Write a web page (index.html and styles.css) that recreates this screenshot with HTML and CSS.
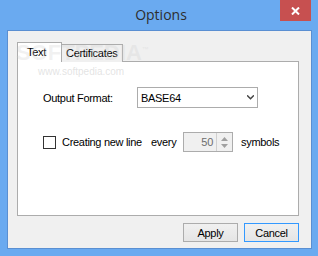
FILE: index.html
```html
<!DOCTYPE html>
<html>
<head>
<meta charset="utf-8">
<link rel="stylesheet" href="styles.css">
</head>
<body>
<div class="window">
  <div class="titlebar">
    <span></span>
    <span class="title">Options</span>
    <div class="close">
      <svg width="9" height="8" viewBox="0 0 9 8"><path d="M1 0.5 L8 7.5 M8 0.5 L1 7.5" stroke="#fff" stroke-width="2"/></svg>
    </div>
  </div>
  <div class="client">
    <div class="tabs">
      <div class="tab active">Text</div>
      <div class="tab cert">Certificates</div>
    </div>
    <div class="panel">
      <div class="row format">
        <span class="label">Output Format:</span>
        <div class="select">
          <span>BASE64</span>
          <svg width="7" height="5" viewBox="0 0 7 5"><path d="M0.5 0.8 L3.5 3.8 L6.5 0.8" stroke="#444" stroke-width="1.5" fill="none" stroke-linecap="round"/></svg>
        </div>
      </div>
      <div class="row newline">
        <span class="checkbox"></span>
        <span class="cblabel">Creating new line</span>
        <span class="every">every</span>
        <div class="spin">
          <span class="value">50</span>
          <div class="arrows">
            <svg width="7" height="4" viewBox="0 0 7 4"><path d="M0 4 L3.5 0 L7 4 Z" fill="#a0a0a0"/></svg>
            <svg width="7" height="4" viewBox="0 0 7 4"><path d="M0 0 L3.5 4 L7 0 Z" fill="#a0a0a0"/></svg>
          </div>
        </div>
        <span class="symbols">symbols</span>
      </div>
    </div>
    <div class="buttons">
      <button class="btn">Apply</button>
      <button class="btn default">Cancel</button>
    </div>
  </div>
  <div class="watermark">
    <span class="wm-big">SOFTPEDIA<sup>™</sup></span>
    <span class="wm-small">www.softpedia.com</span>
  </div>
</div>
</body>
</html>
```

FILE: styles.css
```css
* { box-sizing: border-box; }
html, body { margin: 0; padding: 0; }
body { width: 318px; height: 256px; overflow: hidden; font-family: "Liberation Sans", Arial, sans-serif; font-size: 11px; letter-spacing: -0.3px; color: #000; }

.window {
  position: relative;
  width: 318px; height: 256px;
  background: #6aaaf0;
  padding: 0 6px 7px 7px;
  display: flex; flex-direction: column;
}
.titlebar {
  height: 30px;
  display: grid;
  grid-template-columns: 1fr auto 1fr;
  align-items: start;
}
.title {
  font-family: "Open Sans", "Noto Sans", sans-serif;
  font-size: 14px;
  letter-spacing: 0;
  color: #2e2e2e;
  line-height: 30px;
  padding-left: 3px;
}
.close {
  justify-self: end;
  margin-right: 1px;
  width: 31px; height: 21px;
  background: #c75050;
  display: flex; align-items: center; justify-content: center;
}
.client {
  flex: 1;
  background: #f0f0f0;
  border: 1px solid #5a8fd2;
  padding: 11px 12px 5px 9px;
  display: flex; flex-direction: column;
}
.tabs { display: flex; align-items: flex-end; height: 20px; position: relative; z-index: 1; }
.tab {
  height: 18px;
  border: 1px solid #acacac;
  border-bottom: none;
  background: #f0f0f0;
  line-height: 17px;
}
.tab.active {
  height: 20px;
  width: 45px;
  background: #fff;
  padding-left: 9px;
  line-height: 18px;
}
.tab.cert { width: 61px; padding-left: 4px; border-left: none; }
.panel {
  height: 155px;
  margin-top: -1px;
  background: #fff;
  border: 1px solid #acacac;
  padding: 25px 0 0 25px;
}
.row { display: flex; align-items: center; }
.format .label { width: 94px; }
.select {
  width: 121px; height: 21px;
  border: 1px solid #acacac;
  display: flex; align-items: center; justify-content: space-between;
  padding: 0 3px 0 3px;
}
.newline { margin-top: 24px; }
.checkbox {
  width: 13px; height: 13px;
  border: 1px solid #333;
  background: #fff;
  margin-right: 6px;
}
.cblabel { width: 89px; }
.every { width: 32px; }
.spin {
  width: 50px; height: 20px;
  border: 1px solid #acacac;
  background: #f0f0f0;
  display: flex; align-items: center; justify-content: flex-end;
}
.spin .value { color: #6d6d6d; margin-right: 3px; }
.arrows {
  width: 16px; height: 18px;
  border-left: 1px solid #d0d0d0;
  display: flex; flex-direction: column; align-items: center; justify-content: space-around;
  padding: 2px 0;
}
.symbols { margin-left: 8px; }
.buttons {
  display: flex; justify-content: flex-end; gap: 6px;
  margin-top: 7px;
}
.btn {
  width: 55px; height: 19px;
  font-family: "Liberation Sans", Arial, sans-serif;
  font-size: 11px;
  letter-spacing: -0.3px;
  color: #000;
  border: 1px solid #acacac;
  background: linear-gradient(#f0f0f0, #e5e5e5);
  padding: 0;
}
.btn.default { border-color: #3399ff; }

.watermark {
  position: absolute; left: 16px; top: 40px;
  pointer-events: none;
  display: flex; flex-direction: column;
  z-index: 2;
  letter-spacing: 0;
}
.wm-big {
  font-family: "Liberation Sans", Arial, sans-serif;
  font-size: 22px; font-weight: bold; letter-spacing: 0;
  color: rgba(200,200,200,0.25);
}
.wm-big sup { font-size: 7px; }
.wm-small {
  margin-left: 22px;
  font-size: 10px;
  color: rgba(200,200,200,0.5);
}
```
